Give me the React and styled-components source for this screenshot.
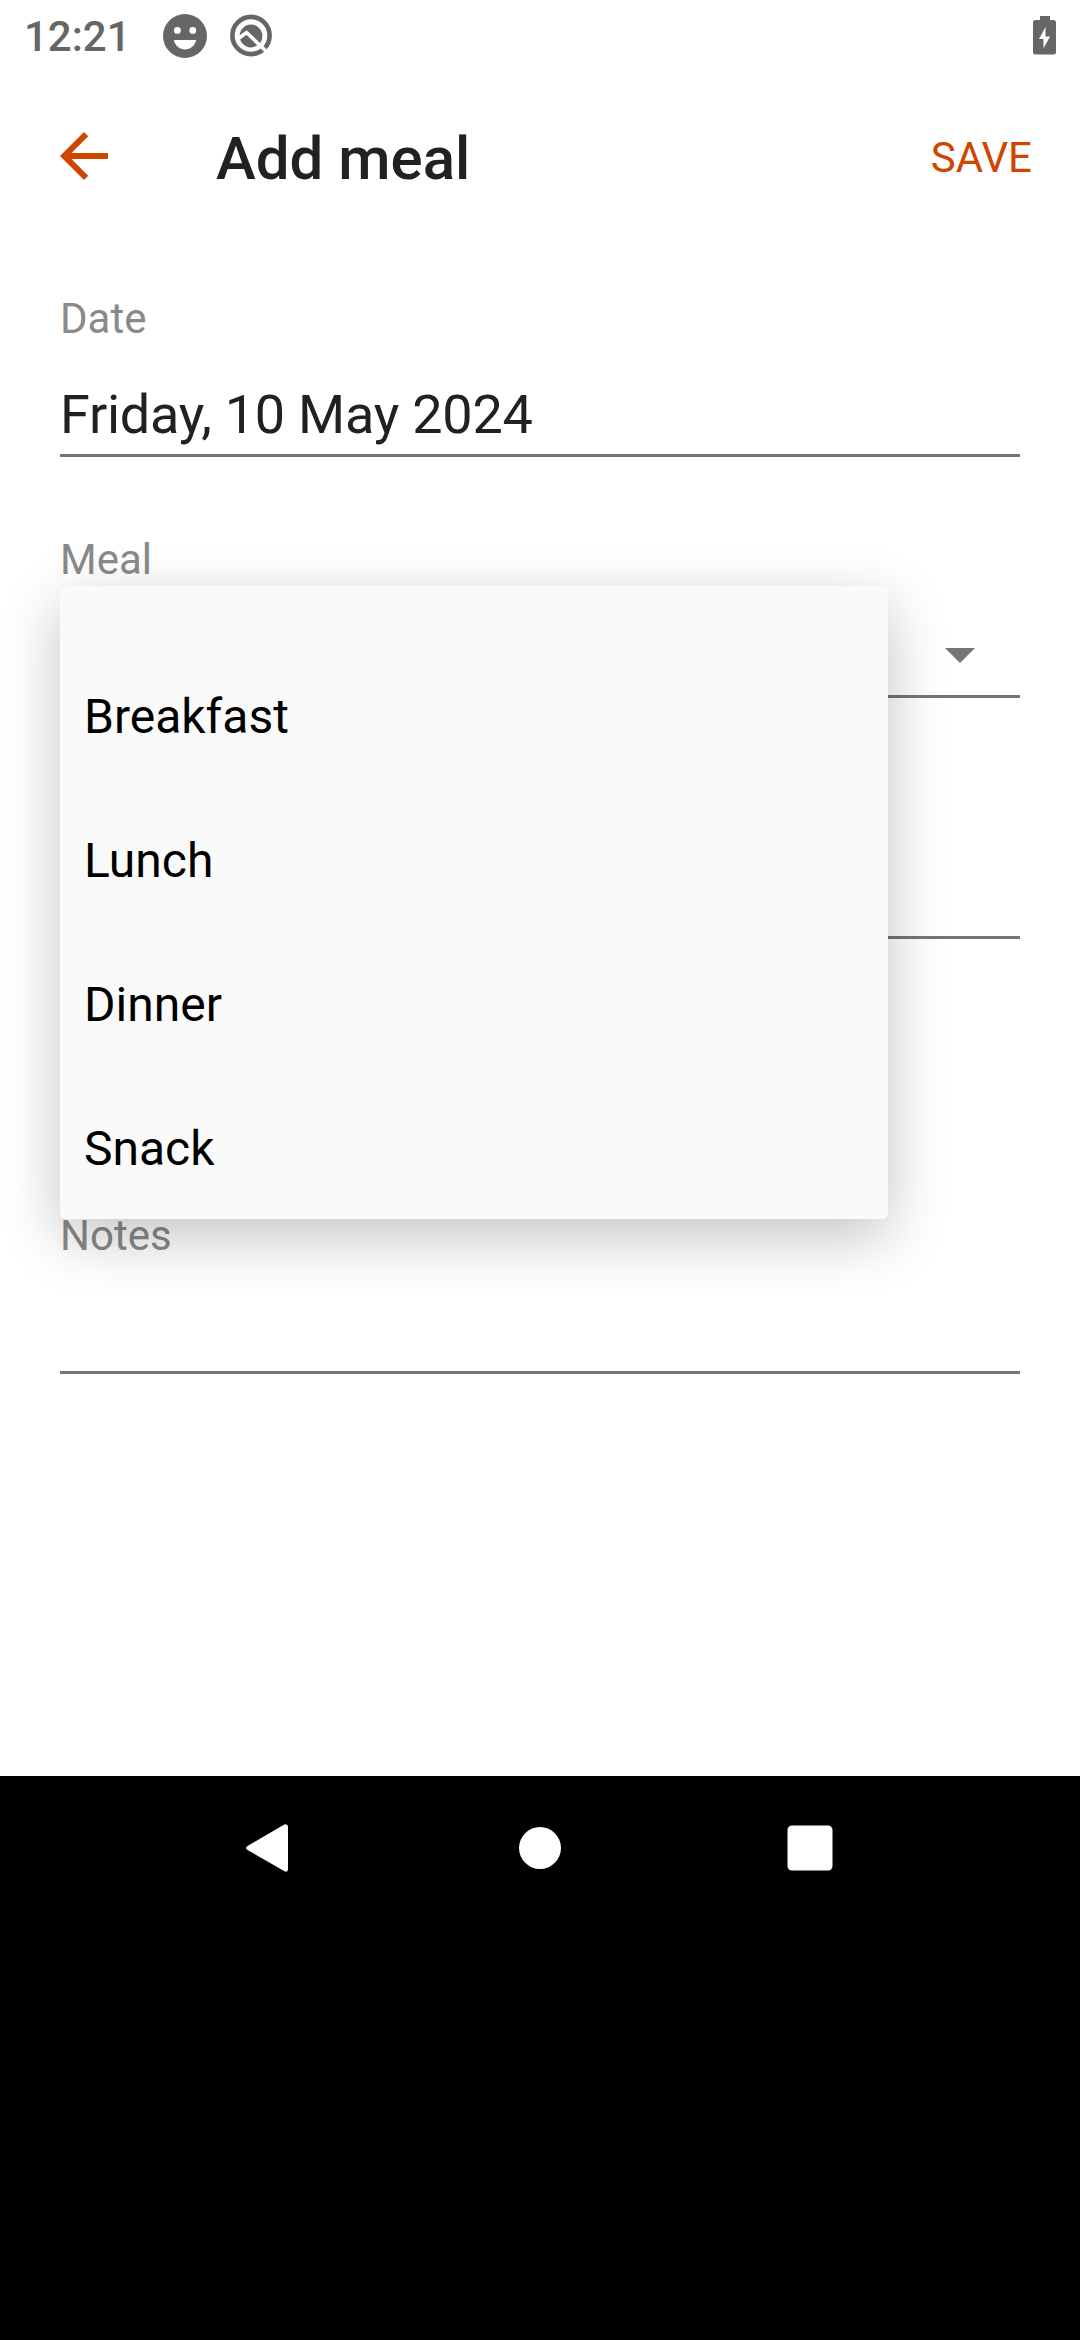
import React from "react";
import styled, { createGlobalStyle } from "styled-components";

const GlobalStyle = createGlobalStyle`
  *, *::before, *::after { box-sizing: border-box; }
  body {
    margin: 0;
    background: #fff;
    font-family: Roboto, "Noto Sans", sans-serif;
  }
  svg { display: block; flex: none; }
`;

const Screen = styled.div`
  display: flex;
  flex-direction: column;
  width: 1080px;
  height: 2340px;
  overflow: hidden;
  background: #fff;
`;

const StatusBar = styled.header`
  display: flex;
  align-items: center;
  height: 72px;
  padding: 0 24px;
  color: #666;
`;

const Clock = styled.span`
  margin-top: 2px;
  width: 136px;
  font-size: 42px;
  line-height: 50px;
  font-weight: 500;
`;

const Notifications = styled.div`
  display: flex;
  flex: 1;
  gap: 18px;
`;

const AppBar = styled.div`
  display: flex;
  align-items: center;
  height: 168px;
  padding: 0 48px;
`;

const IconButton = styled.button`
  padding: 0;
  border: 0;
  background: none;
  color: #d04500;
`;

const Title = styled.h1`
  flex: 1;
  margin: 5px 0 0 96px;
  font-size: 60px;
  line-height: 71px;
  font-weight: 500;
  color: #212121;
`;

const SaveButton = styled.button`
  margin-top: 3px;
  padding: 0;
  border: 0;
  background: none;
  font: 400 42px/49px Roboto, sans-serif;
  color: #d04500;
`;

const Form = styled.main`
  display: flex;
  flex-direction: column;
  gap: 78px;
  flex: 1;
  padding: 54px 60px 0;
`;

const Field = styled.div`
  position: relative;
  margin-top: ${(p) => p.$spaceAbove || 0}px;
`;

const Label = styled.div`
  height: 49px;
  font-size: 42px;
  line-height: 49px;
  color: #8a8a8a;
`;

const Value = styled.div`
  display: flex;
  align-items: center;
  justify-content: ${(p) => (p.$end ? "flex-end" : "flex-start")};
  height: 114px;
  padding: ${(p) => (p.$end ? "29px 24px 0 0" : "40px 0 8px")};
  border-bottom: 3px solid #757575;
  font-size: 54px;
  line-height: 63px;
  letter-spacing: -0.25px;
  color: #212121;
`;

const Menu = styled.ul`
  position: absolute;
  z-index: 1;
  top: 51px;
  left: 0;
  width: 828px;
  height: 633px;
  margin: 0;
  padding: 58px 0 0;
  overflow: hidden;
  list-style: none;
  border-radius: 6px;
  background: #fafafa;
  box-shadow: 0 18px 60px rgba(0, 0, 0, 0.24);
`;

const MenuItem = styled.li`
  display: flex;
  align-items: center;
  height: 144px;
  padding: 0 24px;
  font-size: 48px;
  line-height: 57px;
  color: #000;
`;

const NavBar = styled.nav`
  display: flex;
  justify-content: center;
  align-items: flex-start;
  gap: 198px;
  height: 564px;
  padding-top: 36px;
  background: #000;
  color: #fff;
`;

const EmojiIcon = () => (
  <svg width="50" height="50" viewBox="0 0 50 50">
    <circle cx="25" cy="25" r="22" fill="currentColor" />
    <circle cx="17.4" cy="19.4" r="3.4" fill="#fff" />
    <circle cx="32.8" cy="19.4" r="3.4" fill="#fff" />
    <path d="M13.8 29h22.4c-1.2 5.600-5.700 9.400-11.200 9.400S15 34.600 13.800 29z" fill="#fff" />
  </svg>
);

const SystemIcon = () => (
  <svg width="48" height="50" viewBox="0 0 48 50" fill="none">
    <circle cx="23" cy="24.500" r="18.600" stroke="currentColor" strokeWidth="4.600" />
    <circle cx="23" cy="25" r="11.400" fill="currentColor" />
    <path d="M11 27l7.500-5.500L40 42" stroke="#fff" strokeWidth="3.600" />
  </svg>
);

const BatteryIcon = () => (
  <svg width="23" height="40" viewBox="0 0 23 40">
    <path
      d="M7 0h10v4h3.500A2.500 2.500 0 0 1 23 6.500V36a2.500 2.500 0 0 1-2.500 2.500h-18A2.500 2.500 0 0 1 0 36V6.500A2.500 2.500 0 0 1 2.500 4H7z"
      fill="currentColor"
    />
    <path d="M12.500 11L6 23h4.500v9.500L17 20.500h-4.500z" fill="#fff" />
  </svg>
);

const BackArrow = () => (
  <svg width="72" height="72" viewBox="0 0 24 24" fill="currentColor">
    <path d="M20 11H7.830l5.590-5.590L12 4l-8 8 8 8 1.410-1.410L7.830 13H20v-2z" />
  </svg>
);

const DropDownArrow = () => (
  <svg width="72" height="72" viewBox="0 0 24 24" fill="#757575">
    <path d="M7 10l5 5 5-5z" />
  </svg>
);

const NavIcon = ({ children }) => (
  <svg width="72" height="72" viewBox="0 0 72 72" fill="currentColor">
    {children}
  </svg>
);

const MEALS = ["Breakfast", "Lunch", "Dinner", "Snack"];

export default function App() {
  return (
    <>
      <GlobalStyle />
      <Screen>
        <StatusBar>
          <Clock>12:21</Clock>
          <Notifications>
            <EmojiIcon />
            <SystemIcon />
          </Notifications>
          <BatteryIcon />
        </StatusBar>
        <AppBar>
          <IconButton aria-label="Back">
            <BackArrow />
          </IconButton>
          <Title>Add meal</Title>
          <SaveButton>SAVE</SaveButton>
        </AppBar>
        <Form>
          <Field>
            <Label>Date</Label>
            <Value>Friday, 10 May 2024</Value>
          </Field>
          <Field>
            <Label>Meal</Label>
            <Value $end>
              <DropDownArrow />
            </Value>
            <Menu>
              {MEALS.map((meal) => (
                <MenuItem key={meal}>{meal}</MenuItem>
              ))}
            </Menu>
          </Field>
          <Field>
            <Label />
            <Value />
          </Field>
          <Field $spaceAbove={194}>
            <Label>Notes</Label>
            <Value />
          </Field>
        </Form>
        <NavBar>
          <NavIcon>
            <path d="M52 12.500Q54 12 54 15V57Q54 60.500 51 59.500L13.500 38Q10.500 36 13.500 34L49.500 13Q51 12 52 12.500z" />
          </NavIcon>
          <NavIcon>
            <circle cx="36" cy="36" r="21" />
          </NavIcon>
          <NavIcon>
            <rect x="13.500" y="13.500" width="45" height="45" rx="4.500" />
          </NavIcon>
        </NavBar>
      </Screen>
    </>
  );
}
